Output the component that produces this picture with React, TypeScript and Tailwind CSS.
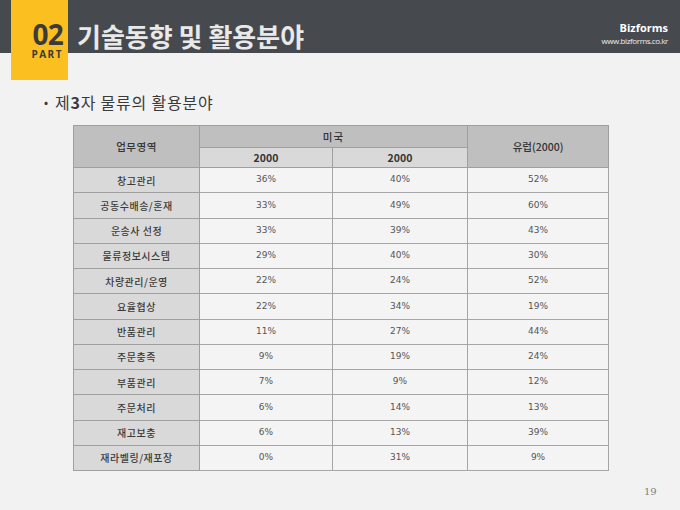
import React from 'react'

const KR = '"Noto Sans CJK KR", "Liberation Sans", sans-serif'

const ROWS: [string, string, string, string][] = [
  ['창고관리', '36%', '40%', '52%'],
  ['공동수배송/혼재', '33%', '49%', '60%'],
  ['운송사 선정', '33%', '39%', '43%'],
  ['물류정보시스템', '29%', '40%', '30%'],
  ['차량관리/운영', '22%', '24%', '52%'],
  ['요율협상', '22%', '34%', '19%'],
  ['반품관리', '11%', '27%', '44%'],
  ['주문충족', '9%', '19%', '24%'],
  ['부품관리', '7%', '9%', '12%'],
  ['주문처리', '6%', '14%', '13%'],
  ['재고보충', '6%', '13%', '39%'],
  ['재라벨링/재포장', '0%', '31%', '9%'],
]

export default function App() {
  return (
    <div className="relative w-[680px] h-[510px] bg-[#f2f2f2] overflow-hidden" style={{ fontFamily: KR }}>
      {/* Header */}
      <div className="h-[53px] bg-[#464a4f] flex items-start">
        <div className="ml-[11px] w-[57px] h-[80px] bg-[#fbbf1f] flex flex-col items-end pr-[5px] pt-[19px] z-10 shrink-0">
          <span className="text-[28px] leading-[30px] font-bold text-[#3b3b3b] tracking-[-0.8px]" style={{ fontFamily: '"Open Sans", sans-serif' }}>02</span>
          <span className="text-[10px] leading-[10px] font-bold text-[#3b3b3b] tracking-[1.5px]" style={{ fontFamily: '"Open Sans", sans-serif' }}>PART</span>
        </div>
        <h1 className="ml-[9px] mt-[19px] text-[26px] leading-[34px] font-bold text-[#e9e9e9]">기술동향 및 활용분야</h1>
        <div className="ml-auto mr-[12px] mt-[21px] flex flex-col items-end text-white">
          <span className="text-[11px] leading-[14px] font-bold" style={{ fontFamily: '"Open Sans", sans-serif' }}>Bizforms</span>
          <span className="text-[8px] leading-[11px] tracking-[-0.4px] text-[#eeeeee]" style={{ fontFamily: '"Open Sans", sans-serif' }}>www.bizforms.co.kr</span>
        </div>
      </div>

      {/* Bullet */}
      <div className="ml-[44px] mt-[39px] text-[16px] leading-[20px] tracking-[0.8px] text-[#3a3a3a] flex items-center gap-[6px]">
        <span className="text-[12px]">•</span>
        <span>제<b>3</b>자 물류의 활용분야</span>
      </div>

      {/* Table */}
      <table className="ml-[73px] mt-[13px] w-[535px] table-fixed border-collapse">
        <colgroup>
          <col className="w-[126px]" />
          <col className="w-[133px]" />
          <col className="w-[135px]" />
          <col className="w-[141px]" />
        </colgroup>
        <thead>
          <tr className="h-[22px]">
            <th rowSpan={2} className="bg-[#bfbfbf] border border-[#9f9f9f] text-[10.5px] font-medium tracking-[0.5px] text-[#333333]">업무영역</th>
            <th colSpan={2} className="bg-[#bfbfbf] border border-[#9f9f9f] text-[10.5px] font-medium tracking-[1px] text-[#333333]">미국</th>
            <th rowSpan={2} className="bg-[#bfbfbf] border border-[#9f9f9f] text-[10.5px] font-medium text-[#333333]">유럽(2000)</th>
          </tr>
          <tr className="h-[20px]">
            <th className="bg-[#d9d9d9] border border-[#9f9f9f] text-[10.5px] font-bold text-[#333333]">2000</th>
            <th className="bg-[#d9d9d9] border border-[#9f9f9f] text-[10.5px] font-bold text-[#333333]">2000</th>
          </tr>
        </thead>
        <tbody>
          {ROWS.map(r => (
            <tr key={r[0]} className="h-[25.25px]">
              <td className="bg-[#d9d9d9] border border-[#9f9f9f] text-center text-[10px] font-medium tracking-[0.5px] text-[#3a3a3a] p-0">{r[0]}</td>
              {r.slice(1).map((v, i) => (
                <td key={i} className="bg-[#f4f4f4] border border-[#a6a6a6] text-center text-[9px] text-[#555555] p-0" style={{ fontFamily: '"DejaVu Sans", sans-serif' }}>{v}</td>
              ))}
            </tr>
          ))}
        </tbody>
      </table>

      <div className="absolute left-[644px] top-[484px] text-[10px] text-[#7f7f7f]" style={{ fontFamily: '"DejaVu Serif", serif' }}>19</div>
    </div>
  )
}
